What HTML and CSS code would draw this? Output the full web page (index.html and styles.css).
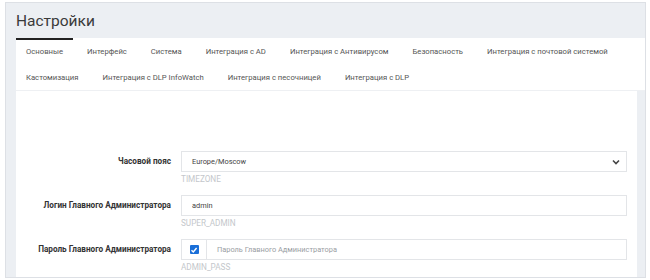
FILE: index.html
```html
<!DOCTYPE html>
<html lang="ru">
  <head>
    <meta charset="UTF-8" />
    <title>Настройки</title>
    <meta name="viewport" content="width=device-width, initial-scale=1.0" />
    <link rel="stylesheet" href="styles.css">
  </head>
  <body>
    <div class="panel">
      <div class="panel-header">
        <h1>Настройки</h1>
      </div>

      <div class="panel-body">
        <ul class="tabs">
          <li class="tab active">Основные</li>
          <li class="tab">Интерфейс</li>
          <li class="tab">Система</li>
          <li class="tab">Интеграция с AD</li>
          <li class="tab">Интеграция с Антивирусом</li>
          <li class="tab">Безопасность</li>
          <li class="tab">Интеграция с почтовой системой</li>
          <li class="tab">Кастомизация</li>
          <li class="tab">Интеграция с DLP InfoWatch</li>
          <li class="tab">Интеграция с песочницей</li>
          <li class="tab">Интеграция с DLP</li>
        </ul>

        <div class="tab-content">
          <div class="form-row">
            <label class="form-label">Часовой пояс</label>
            <div class="form-field">
              <div class="select">
                <span>Europe/Moscow</span>
                <svg class="chevron" width="8" height="6" viewBox="0 0 8 6">
                  <path d="M1 1.5 L4 4.5 L7 1.5" fill="none" stroke="#444" stroke-width="1.6" />
                </svg>
              </div>
              <div class="hint">TIMEZONE</div>
            </div>
          </div>

          <div class="form-row">
            <label class="form-label">Логин Главного Администратора</label>
            <div class="form-field">
              <div class="input">admin</div>
              <div class="hint">SUPER_ADMIN</div>
            </div>
          </div>

          <div class="form-row">
            <label class="form-label">Пароль Главного Администратора</label>
            <div class="form-field">
              <div class="input-group">
                <span class="addon">
                  <span class="checkbox">
                    <svg width="8" height="8" viewBox="0 0 8 8">
                      <path d="M1.5 4.2 L3.3 6 L6.6 2" fill="none" stroke="#fff" stroke-width="1.4" />
                    </svg>
                  </span>
                </span>
                <div class="input placeholder">Пароль Главного Администратора</div>
              </div>
              <div class="hint">ADMIN_PASS</div>
            </div>
          </div>
        </div>
      </div>
    </div>
  </body>
</html>
```

FILE: styles.css
```css
body {
  font-family: Roboto, "Liberation Sans", sans-serif;
  background: #fff;
  margin: 0;
  padding: 2px 5px 0 5px;
  color: #333;
}

.panel {
  width: 639px;
  height: 274px;
  border: 1px solid #dde0e5;
  background: #eceff3;
  overflow: hidden;
}

.panel-header {
  height: 35px;
  display: flex;
  align-items: center;
  padding-left: 10px;
}

h1 {
  margin: 0;
  font-size: 15.5px;
  font-weight: 400;
  color: #3a3a3a;
}

.panel-body {
  padding-left: 10px;
}

.tabs {
  list-style: none;
  margin: 0;
  padding: 0;
  display: flex;
  flex-wrap: wrap;
  gap: 0 4px;
  background: #fff;
  border-bottom: 1px solid #eef0f3;
}

.tab {
  height: 24px;
  line-height: 24px;
  padding: 0 10px;
  border-top: 2px solid transparent;
  font-size: 7.7px;
  color: #555;
  background: #fff;
}

.tab.active {
  border-top-color: #222;
}

.tab-content {
  background: #fff;
  margin-right: 8px;
  padding: 60px 10px 20px 0;
}

.form-row {
  display: flex;
  margin-bottom: 6px;
}

.form-label {
  width: 155px;
  padding-right: 10px;
  text-align: right;
  font-size: 8.2px;
  font-weight: bold;
  color: #333;
  line-height: 21px;
}

.form-field {
  flex: 1;
}

.select,
.input {
  height: 19px;
  border: 1px solid #e3e5e8;
  padding: 0 10px;
  display: flex;
  align-items: center;
  justify-content: space-between;
  font-size: 7.4px;
  color: #444;
  background: #fff;
}

.chevron {
  margin-right: -4px;
}

.hint {
  font-size: 8.2px;
  color: #c4c7cb;
  height: 17px;
  line-height: 14px;
}

.input-group {
  display: flex;
}

.addon {
  width: 24px;
  height: 19px;
  border: 1px solid #e3e5e8;
  border-right: none;
  display: flex;
  align-items: center;
  justify-content: center;
}

.checkbox {
  width: 9px;
  height: 9px;
  border-radius: 1px;
  background: #1a6fd8;
  display: flex;
  align-items: center;
  justify-content: center;
}

.input-group .input {
  flex: 1;
}

.placeholder {
  color: #9a9ea3;
}
```
